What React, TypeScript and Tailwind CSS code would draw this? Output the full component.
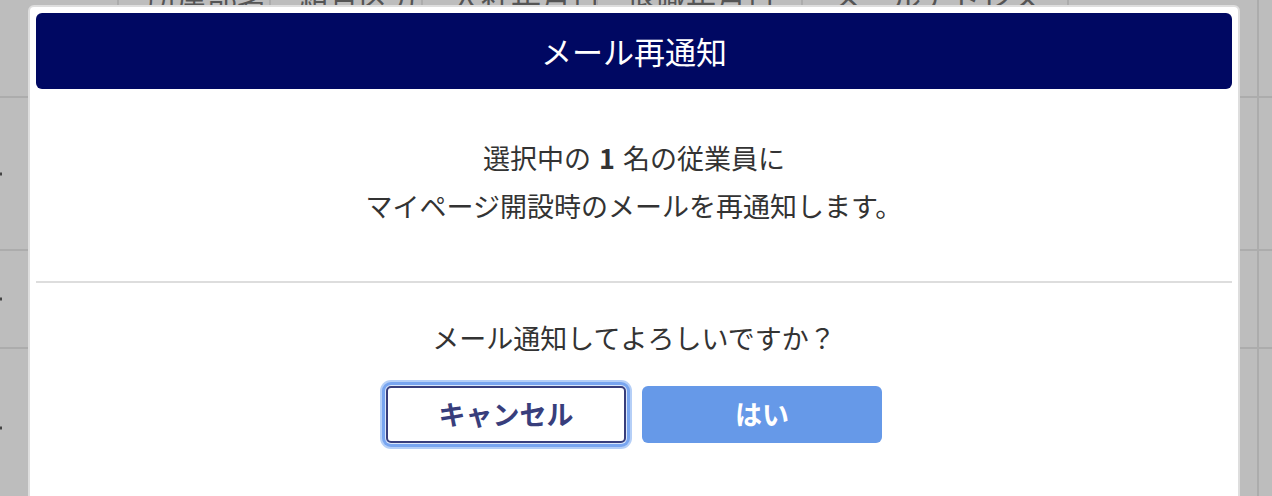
import React from "react";

const cols = [117, 152, 152, 175, 205, 266, 190, 15];
const heads = ["", "所属部署", "組合区分", "入社年月日", "退職年月日", "メールアドレス", "", ""];

function Row({ h, dot }: { h: number; dot?: boolean }) {
  return (
    <div className="flex border-b-2 border-[#acacac]" style={{ height: h }}>
      {cols.map((w, i) => (
        <div
          key={i}
          className={`relative shrink-0 ${i > 0 ? "border-l-2 border-[#acacac]" : ""}`}
          style={{ width: w }}
        >
          {i === 0 && dot ? (
            <span className="absolute left-0 top-1/2 h-[3px] w-[2px] -translate-y-1/2 bg-[#444]" />
          ) : null}
        </div>
      ))}
    </div>
  );
}

export default function App() {
  return (
    <div
      className="relative h-[496px] w-[1272px] overflow-hidden bg-[#bdbdbd]"
      style={{ fontFamily: '"Noto Sans CJK JP", "Noto Sans", sans-serif' }}
    >
      {/* background table */}
      <div className="flex h-[98px] border-b-2 border-[#acacac]">
        {cols.map((w, i) => (
          <div
            key={i}
            className={`shrink-0 overflow-hidden ${i > 0 ? "border-l-2 border-[#acacac]" : ""}`}
            style={{ width: w }}
          >
            <div className="-mt-[19px] pl-[28px] text-[30px] leading-[30px] whitespace-nowrap text-[#555]">
              {heads[i]}
            </div>
          </div>
        ))}
      </div>
      <Row h={153} dot />
      <Row h={98} dot />
      <Row h={160} dot />

      {/* dialog */}
      <div className="absolute left-[28px] top-[5px] w-[1212px] rounded-[6px] border-2 border-[#dedede] bg-white p-[6px] pb-[80px]">
        <div className="flex h-[76px] items-center justify-center rounded-[6px] bg-[#000862] text-[31px] text-white">
          メール再通知
        </div>
        <div className="pt-[45px] pb-[51px] text-center text-[27px] leading-[48px] text-[#333]">
          <p>
            選択中の<span className="px-[8px] font-bold">1</span>名の従業員に
          </p>
          <p>マイページ開設時のメールを再通知します。</p>
        </div>
        <div className="h-[2px] bg-[#dddddd]" />
        <p className="mt-[31px] text-center text-[27px] leading-[48px] text-[#333]">
          メール通知してよろしいですか？
        </p>
        <div className="mt-[24px] flex justify-center gap-[16px]">
          <button className="flex h-[57px] w-[240px] items-center justify-center rounded-[5px] border-2 border-[#383e7c] bg-white text-[27px] font-bold text-[#383e7c] shadow-[0_0_0_1px_#dbe7fb,0_0_0_4px_#78a5f0,0_0_0_6px_#b5cff7]">
            キャンセル
          </button>
          <button className="flex h-[57px] w-[240px] items-center justify-center rounded-[6px] bg-[#6699e8] text-[27px] font-bold text-white">
            はい
          </button>
        </div>
      </div>
    </div>
  );
}
